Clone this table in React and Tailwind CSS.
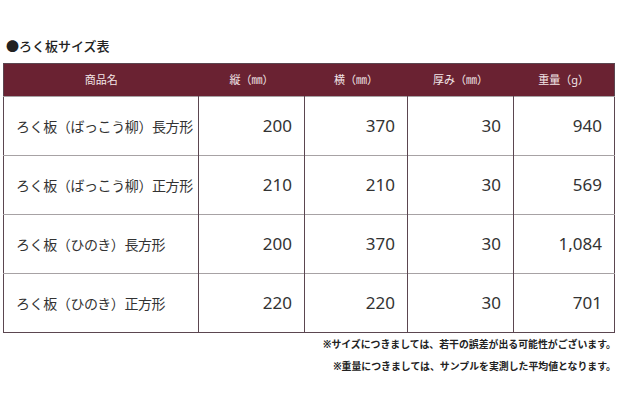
const rows = [
  { name: "ろく板（ばっこう柳）長方形", h: "200", w: "370", t: "30", g: "940" },
  { name: "ろく板（ばっこう柳）正方形", h: "210", w: "210", t: "30", g: "569" },
  { name: "ろく板（ひのき）長方形", h: "200", w: "370", t: "30", g: "1,084" },
  { name: "ろく板（ひのき）正方形", h: "220", w: "220", t: "30", g: "701" },
];

const heads = ["商品名", "縦（㎜）", "横（㎜）", "厚み（㎜）", "重量（g）"];
const widths = ["w-[195px]", "w-[106px]", "w-[103px]", "w-[106px]", "w-[101px]"];

export default function App() {
  return (
    <div
      className="w-[620px] h-[413px] bg-white text-[#333] overflow-hidden"
      style={{ fontFamily: '"Noto Sans", "Noto Sans CJK JP", sans-serif' }}
    >
      <div className="pt-[37px] pl-[6px] h-[63px] text-[13px] font-medium text-[#222] leading-[18px]">
        ●ろく板サイズ表
      </div>
      <table className="ml-[3px] w-[611px] border-collapse table-fixed border-[1.5px] border-[#5b4650]">
        <thead>
          <tr className="bg-[#6a2232] h-[33px]">
            {heads.map((h, i) => (
              <th
                key={h}
                className={`${widths[i]} text-[11px] font-normal text-[#f3e6e8] text-center p-0`}
              >
                {h}
              </th>
            ))}
          </tr>
        </thead>
        <tbody>
          {rows.map((r) => (
            <tr key={r.name} className="h-[59px] border-t-[1.5px] border-[#a7a2a4]">
              <td className="text-[14px] pl-[12px] pr-0 tracking-[-0.4px] border-r-[1.5px] border-[#5b4650]">
                {r.name}
              </td>
              {[r.h, r.w, r.t, r.g].map((v, i) => (
                <td
                  key={i}
                  className={`text-[17px] text-right pr-[12px] ${i < 3 ? "border-r-[1.5px] border-[#5b4650]" : ""}`}
                >
                  {v}
                </td>
              ))}
            </tr>
          ))}
        </tbody>
      </table>
      <div className="pr-[4px] pt-0 flex flex-col items-end text-[9.9px] font-bold text-[#222] leading-[22px]">
        <div>※サイズにつきましては、若干の誤差が出る可能性がございます。</div>
        <div>※重量につきましては、サンプルを実測した平均値となります。</div>
      </div>
    </div>
  );
}
